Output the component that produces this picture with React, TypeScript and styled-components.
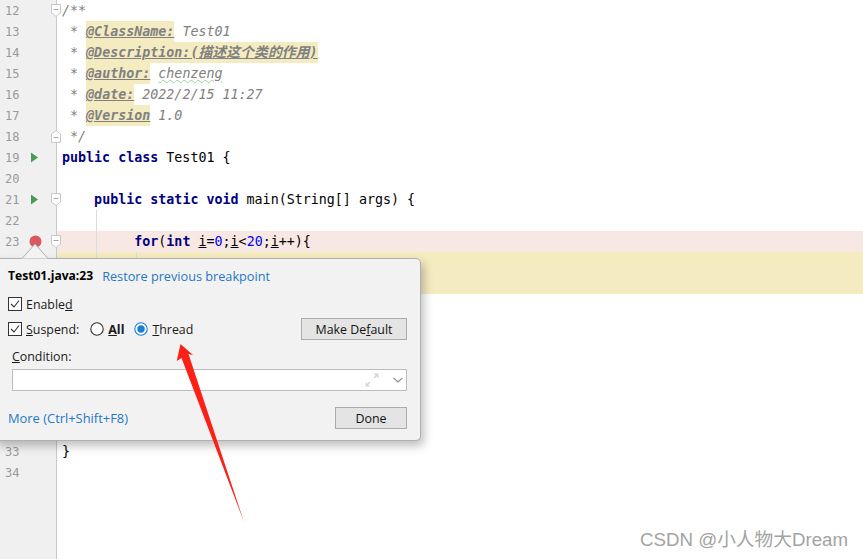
import React from "react";
import styled, { createGlobalStyle } from "styled-components";

const Global = createGlobalStyle`
  html, body { margin: 0; padding: 0; height: 100%; background: #fff; overflow: hidden; }
  #root { height: 100%; }
`;

const Editor = styled.div`
  position: relative;
  width: 863px;
  height: 559px;
  overflow: hidden;
  display: flex;
  flex-direction: column;
  font-family: "DejaVu Sans Mono", "Noto Sans CJK SC", monospace;
  font-size: 13.33px;
  color: #000;
`;

const RowBox = styled.div<{ $tone?: "pink" | "yellow" }>`
  position: relative;
  display: flex;
  height: 21px;
  flex: none;
  line-height: 21px;
  background: ${(p) => (p.$tone === "pink" ? "#f8e8e4" : p.$tone === "yellow" ? "#f5ebc1" : "transparent")};
`;

const Gutter = styled.div`
  position: relative;
  flex: none;
  box-sizing: border-box;
  width: 57px;
  display: flex;
  align-items: center;
  background: #f0f0f0;
  border-right: 1px solid #c9c9c9;
  padding-left: 5px;
`;

const LineNo = styled.span`
  width: 25px;
  padding-top: 2px;
  font-size: 12px;
  line-height: 19px;
  color: #9a9a9a;
`;

const FoldSlot = styled.svg`
  position: absolute;
  right: -5px;
  top: 3px;
`;

const Code = styled.div`
  padding-left: 5px;
  white-space: pre;
`;

const Filler = styled.div`
  flex: 1;
  display: flex;
`;

const FillGutter = styled(Gutter)`
  height: 100%;
`;

const Guide = styled.div<{ $x: number }>`
  position: absolute;
  top: 0;
  bottom: 0;
  left: ${(p) => p.$x}px;
  width: 1px;
  background: #dcdcdc;
`;

const Comment = styled.span`
  color: #808080;
  font-style: italic;
`;

const Tag = styled.span`
  color: #808080;
  font-style: italic;
  font-weight: bold;
  background: #f5ebc1;
  text-decoration: underline;
  display: inline-block;
  height: 21px;
`;

const Cjk = styled.span`
  font-size: 13.9px;
`;

const Wavy = styled.span`
  text-decoration: underline wavy #9fcf9f 1px;
`;

const Kw = styled.span`
  color: #000080;
  font-weight: bold;
`;

const Num = styled.span`
  color: #0000ff;
`;

const Local = styled.span`
  text-decoration: underline;
`;

const Popup = styled.div`
  position: absolute;
  left: -6px;
  top: 258px;
  box-sizing: border-box;
  width: 427px;
  height: 183px;
  padding: 8px 13px 0 13px;
  display: flex;
  flex-direction: column;
  background: #f2f2f2;
  border: 1px solid #b0b0b0;
  border-radius: 5px;
  box-shadow: 3px 5px 10px rgba(0, 0, 0, 0.25);
  font-family: "Open Sans", "Noto Sans", sans-serif;
  font-size: 12.4px;
  color: #1a1a1a;
`;

const Pointer = styled.svg`
  position: absolute;
  left: 21px;
  top: 243px;
`;

const TitleRow = styled.div`
  display: flex;
  align-items: center;
  gap: 9px;
  height: 17px;
`;

const Title = styled.span`
  font-size: 12.1px;
  font-weight: 700;
  color: #000;
`;

const LinkText = styled.span`
  font-size: 12.7px;
  color: #1f78c8;
`;

const MoreLink = styled(LinkText)`
  font-size: 12.9px;
`;

const EnabledRow = styled.div`
  display: flex;
  align-items: center;
  height: 18px;
  margin-top: 11px;
`;

const SuspendRow = styled.div`
  display: flex;
  align-items: center;
  margin-top: 4px;
  height: 24px;
`;

const CheckBox = styled.svg`
  flex: none;
  margin-right: 4px;
`;

const RadioMark = styled.svg`
  flex: none;
  margin-right: 4px;
`;

const RadioLabel = styled.span<{ $bold?: boolean }>`
  font-weight: ${(p) => (p.$bold ? 700 : 400)};
  margin-right: ${(p) => (p.$bold ? "10px" : "0")};
`;

const Spacer = styled.span<{ $w: number }>`
  display: inline-block;
  flex: none;
  width: ${(p) => p.$w}px;
`;

const Button = styled.div<{ $w: number }>`
  margin-left: auto;
  box-sizing: border-box;
  width: ${(p) => p.$w}px;
  height: 22px;
  display: flex;
  align-items: center;
  justify-content: center;
  background: #e4e4e4;
  border: 1px solid #ababab;
  color: #111;
`;

const ConditionLabel = styled.div`
  margin: 7px 0 0 4px;
  height: 18px;
  line-height: 18px;
`;

const Field = styled.div`
  margin: 3px 0 0 4px;
  box-sizing: border-box;
  height: 22px;
  display: flex;
  align-items: center;
  justify-content: flex-end;
  gap: 14px;
  padding-right: 3px;
  background: #fff;
  border: 1px solid #bcbcbc;
`;

const FooterRow = styled.div`
  display: flex;
  align-items: center;
  margin-top: 16px;
`;

const ArrowMark = styled.svg`
  position: absolute;
  left: 0;
  top: 0;
  pointer-events: none;
`;

const Watermark = styled.div`
  position: absolute;
  right: 15px;
  bottom: 8px;
  font-family: "Liberation Sans", "Noto Sans CJK SC", sans-serif;
  font-size: 18.7px;
  line-height: 22px;
  color: #a3a3a3;
  text-shadow: 0 0 1px rgba(255, 255, 255, 0.9);
`;

const Fold = ({ up }: { up?: boolean }) => (
  <FoldSlot width="10" height="15" viewBox="0 0 10 15">
    {up ? (
      <path d="M.5 13.5V5L5 1.5 9.5 5v8.5z" fill="#fff" stroke="#c8c8c8" />
    ) : (
      <path d="M.5 1.5h9V10L5 13.5.5 10z" fill="#fff" stroke="#c8c8c8" />
    )}
    <path d={up ? "M2.5 8.5h5" : "M2.5 6.5h5"} stroke="#a8a8a8" />
  </FoldSlot>
);

const Run = () => (
  <svg width="9" height="11" viewBox="0 0 9 11">
    <path d="M1 .5 8 5.5 1 10.5z" fill="#499c54" />
  </svg>
);

const Dot = () => (
  <svg width="13" height="13" viewBox="0 0 13 13" style={{ marginLeft: -1 }}>
    <circle cx="6.5" cy="6.5" r="6" fill="#db5860" />
  </svg>
);

type RowProps = {
  n?: number;
  icon?: "run" | "bp";
  fold?: "down" | "up";
  tone?: "pink" | "yellow";
  guides?: number[];
  children?: React.ReactNode;
};

const Row = ({ n, icon, fold, tone, guides, children }: RowProps) => (
  <RowBox $tone={tone}>
    <Gutter>
      <LineNo>{n}</LineNo>
      {icon === "run" && <Run />}
      {icon === "bp" && <Dot />}
      {fold && <Fold up={fold === "up"} />}
    </Gutter>
    <Code>{children}</Code>
    {guides?.map((x) => <Guide key={x} $x={x} />)}
  </RowBox>
);

const Check = () => (
  <CheckBox width="14" height="14" viewBox="0 0 14 14">
    <rect x=".5" y=".5" width="13" height="13" fill="#fff" stroke="#333" />
    <path d="M3 7l3 3 5-6.5" fill="none" stroke="#333" strokeWidth="1.1" />
  </CheckBox>
);

const Radio = ({ on }: { on?: boolean }) => (
  <RadioMark width="14" height="14" viewBox="0 0 14 14">
    <circle cx="7" cy="7" r="6.2" fill="#fff" stroke={on ? "#1a7fd6" : "#333"} strokeWidth="1.1" />
    {on && <circle cx="7" cy="7" r="3.7" fill="#1a7fd6" />}
  </RadioMark>
);

export default function App() {
  return (
    <Editor>
      <Global />
      <Row n={12} fold="down"><Comment>/**</Comment></Row>
      <Row n={13}><Comment> * </Comment><Tag>@ClassName:</Tag><Comment> Test01</Comment></Row>
      <Row n={14}><Comment> * </Comment><Tag>@Description:(<Cjk>描述这个类的作用</Cjk>)</Tag></Row>
      <Row n={15}><Comment> * </Comment><Tag>@author:</Tag><Comment> <Wavy>chenzeng</Wavy></Comment></Row>
      <Row n={16}><Comment> * </Comment><Tag>@date:</Tag><Comment> 2022/2/15 11:27</Comment></Row>
      <Row n={17}><Comment> * </Comment><Tag>@Version</Tag><Comment> 1.0</Comment></Row>
      <Row n={18} fold="up"><Comment> */</Comment></Row>
      <Row n={19} icon="run"><Kw>public class</Kw> Test01 {"{"}</Row>
      <Row n={20} />
      <Row n={21} icon="run" fold="down">    <Kw>public static void</Kw> main(String[] args) {"{"}</Row>
      <Row n={22} guides={[96]} />
      <Row n={23} icon="bp" fold="down" tone="pink" guides={[96]}>
        {"         "}<Kw>for</Kw>(<Kw>int</Kw> <Local>i</Local>=<Num>0</Num>;<Local>i</Local>&lt;<Num>20</Num>;<Local>i</Local>++){"{"}
      </Row>
      <Row tone="yellow" guides={[96, 136]} />
      <Row tone="yellow" />
      {[26, 27, 28, 29, 30, 31, 32].map((n) => <Row key={n} />)}
      <Row n={33}>{"}"}</Row>
      <Row n={34} />
      <Filler><FillGutter /></Filler>

      <Popup>
        <TitleRow>
          <Title>Test01.java:23</Title>
          <LinkText>Restore previous breakpoint</LinkText>
        </TitleRow>
        <EnabledRow>
          <Check />
          <span>Enable<u>d</u></span>
        </EnabledRow>
        <SuspendRow>
          <Check />
          <span><u>S</u>uspend:</span>
          <Spacer $w={11} />
          <Radio />
          <RadioLabel $bold><u>A</u>ll</RadioLabel>
          <Radio on />
          <RadioLabel><u>T</u>hread</RadioLabel>
          <Button $w={106}>Make De<u>f</u>ault</Button>
        </SuspendRow>
        <ConditionLabel><u>C</u>ondition:</ConditionLabel>
        <Field>
          <svg width="14" height="14" viewBox="0 0 14 14">
            <path d="M8.5 .5H13.5V5zM.5 9V13.5H5z" fill="#d4d4d4" />
            <path d="M12 2 9 5M2 12l3-3" stroke="#d4d4d4" strokeWidth="1.2" />
          </svg>
          <svg width="10" height="6" viewBox="0 0 10 6">
            <path d="M.5 .8 5 5 9.5 .8" fill="none" stroke="#888" strokeWidth="1.1" />
          </svg>
        </Field>
        <FooterRow>
          <MoreLink>More (Ctrl+Shift+F8)</MoreLink>
          <Button $w={72}>Done</Button>
        </FooterRow>
      </Popup>

      <Pointer width="28" height="16" viewBox="0 0 28 16">
        <path d="M1 15.5 14 1l13 14.5z" fill="#f2f2f2" />
        <path d="M1 15.5 14 1l13 14.5" fill="none" stroke="#b0b0b0" />
      </Pointer>

      <ArrowMark width="863" height="559" viewBox="0 0 863 559">
        <path d="M180.5 344 193 355 188.5 354 244 522 181.5 358 176.7 361z" fill="#fb2116" />
      </ArrowMark>

      <Watermark>CSDN @小人物大Dream</Watermark>
    </Editor>
  );
}
